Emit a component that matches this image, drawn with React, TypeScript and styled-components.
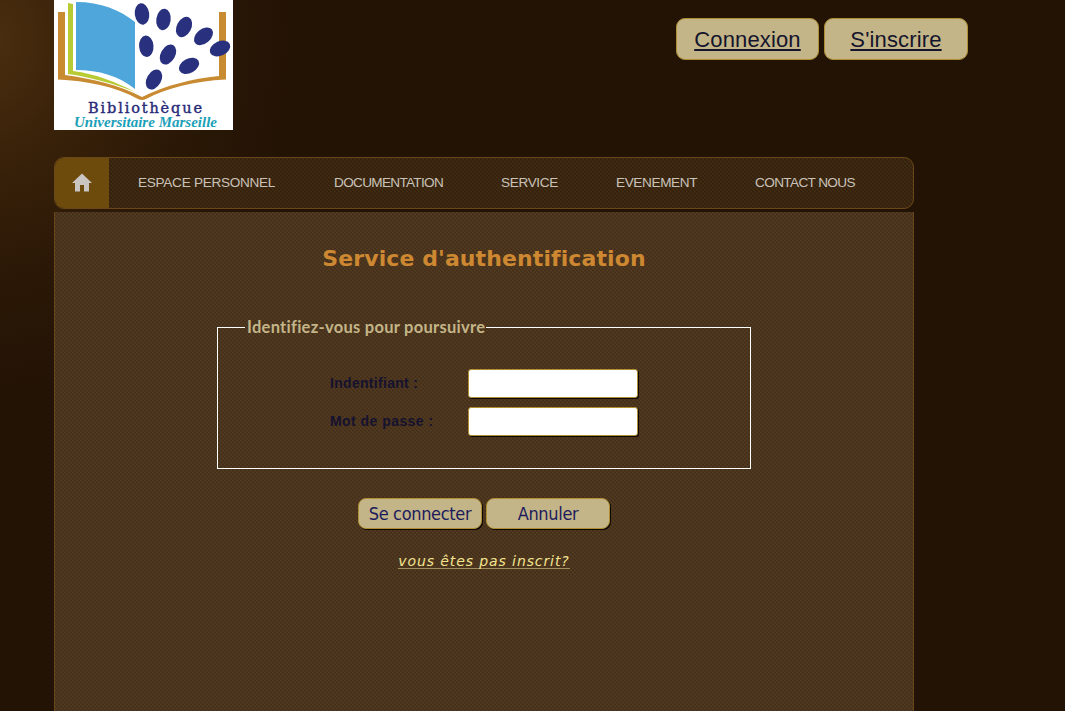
import React from 'react';
import styled, { createGlobalStyle, css } from 'styled-components';

const GlobalStyle = createGlobalStyle`
  * { box-sizing: border-box; }
  html { background: #231305; }
  body {
    margin: 0;
    height: 711px;
    overflow: hidden;
    font-family: "Liberation Sans", Arial, sans-serif;
    background: radial-gradient(ellipse 320px 360px at -20px 40px, #4c2f10 0%, #3b230a 30%, #2b1806 65%, #231305 100%) no-repeat #231305;
  }
`;

const weave = css`
  background-image:
    repeating-linear-gradient(45deg, rgba(255, 210, 140, 0.05) 0 1.414px, transparent 1.414px 2.828px),
    repeating-linear-gradient(-45deg, rgba(0, 0, 0, 0.1) 0 1.414px, transparent 1.414px 2.828px);
`;

const Page = styled.div`
  width: 914px;
  height: 711px;
  margin-left: 54px;
  display: flex;
  flex-direction: column;
`;

const Header = styled.header`
  height: 157px;
  flex: none;
  display: flex;
  justify-content: space-between;
  align-items: flex-start;
`;

const Logo = styled.svg`
  display: block;
  width: 179px;
  height: 130px;
`;

const Account = styled.div`
  display: flex;
  gap: 5px;
  padding-top: 18px;
`;

const AccountLink = styled.a<{ $width: number }>`
  width: ${(p) => p.$width}px;
  height: 42px;
  border: 1px solid #b08f33;
  border-radius: 9px;
  background: #c3b588;
  color: #14142c;
  font-size: 22px;
  letter-spacing: 0.15px;
  line-height: 41px;
  text-align: center;
  text-decoration: underline;
  text-decoration-thickness: 2px;
  text-underline-offset: 2px;
  text-decoration-skip-ink: none;
  white-space: nowrap;
`;

const Nav = styled.nav`
  width: 860px;
  height: 52px;
  flex: none;
  display: flex;
  border: 1px solid #6a4718;
  border-radius: 10px;
  overflow: hidden;
  background-color: #38230d;
  ${weave}
`;

const Home = styled.a`
  width: 54px;
  display: flex;
  align-items: center;
  justify-content: center;
  padding-bottom: 2px;
  background: #6c4b0d;
`;

const NavLink = styled.a<{ $width: number; $spacing: number }>`
  margin-left: 29px;
  margin-right: 29px;
  width: ${(p) => p.$width}px;
  color: #c9c2b9;
  font-size: 13.6px;
  letter-spacing: ${(p) => p.$spacing}px;
  line-height: 49px;
  white-space: nowrap;
`;

const Panel = styled.main`
  width: 860px;
  height: 499px;
  flex: none;
  margin-top: 3px;
  border: solid #6a4718;
  border-width: 0 1px;
  background-color: #4a331c;
  ${weave}
  background-clip: padding-box;
  display: flex;
  flex-direction: column;
  align-items: center;
`;

const Title = styled.h1`
  margin: 33px 0 0;
  height: 28px;
  font: bold 22px/28px "DejaVu Sans", Verdana, sans-serif;
  font-variant-ligatures: none;
  letter-spacing: 0.1px;
  color: #cd8831;
  white-space: nowrap;
`;

const Form = styled.form`
  display: flex;
  flex-direction: column;
  align-items: center;
`;

const Group = styled.fieldset`
  width: 534px;
  height: 153px;
  margin: 43px 0 0;
  padding: 30px 0 0 112px;
  border: 1px solid #fff;
`;

const Legend = styled.legend`
  margin-left: -85px;
  padding: 0 2px;
  height: 22px;
  width: 241px;
  font: bold 16.5px/22px Lato, "Trebuchet MS", sans-serif;
  letter-spacing: 0.27px;
  color: #c3b588;
  white-space: nowrap;
`;

const Field = styled.label`
  display: flex;
  align-items: center;
  height: 30px;
  margin-bottom: 8px;
`;

const FieldName = styled.span<{ $spacing: number }>`
  width: 138px;
  font-size: 14px;
  font-weight: bold;
  letter-spacing: ${(p) => p.$spacing}px;
  color: #15122f;
  white-space: nowrap;
`;

const Input = styled.input`
  width: 170px;
  height: 29px;
  border: 1px solid #b08f33;
  border-radius: 3px;
  background: #fff;
  box-shadow: 1px 1px 0 #0d0703;
  outline: none;
`;

const Actions = styled.div`
  display: flex;
  gap: 4px;
  margin-top: 29px;
`;

const Button = styled.button`
  width: 124px;
  height: 31px;
  padding: 0;
  border: 1px solid #b08f33;
  border-radius: 8px;
  background: #c3b588;
  box-shadow: 1px 1px 0 #0d0703;
  color: #1b1b5c;
  font: 18px/27px "DejaVu Sans Condensed", "DejaVu Sans", Tahoma, sans-serif;
  font-stretch: condensed;
  letter-spacing: -0.33px;
  white-space: nowrap;
`;

const Register = styled.a`
  margin-top: 23px;
  height: 17px;
  border-bottom: 1px solid #a2905c;
  font: italic 14px/19px "DejaVu Sans", Verdana, sans-serif;
  letter-spacing: 0.9px;
  color: #f3e38f;
  white-space: nowrap;
`;

const seeds: [number, number, number][] = [
  [88, 14, -8],
  [109.5, 19.5, 8],
  [130, 27, 28],
  [149.5, 36.3, 50],
  [166, 48.5, 65],
  [92.3, 46.3, -4],
  [114, 54.5, 30],
  [135, 65.8, 62],
  [100, 79.5, 30],
];

const links: [string, number, number][] = [
  ['ESPACE PERSONNEL', 138, -0.29],
  ['DOCUMENTATION', 109, -0.69],
  ['SERVICE', 57, -0.36],
  ['EVENEMENT', 81, -0.39],
  ['CONTACT NOUS', 101, -0.63],
];

const LibraryLogo = () => (
  <Logo viewBox="0 0 179 130" role="img" aria-label="Bibliothèque Universitaire Marseille">
    <rect width="179" height="130" fill="#fff" />
    <path d="M4 12H11V75C39 79 65 85 88 97C113 85 137 79 165 76V12H172V79.500C140 81 113 88 92 99Q88 101 84 99C61 86 32 81 4 79.500Z" fill="#c98b31" />
    <path d="M14 3L19 4V71C42 74 62 82 81 92C61 84 36 77 14 74Z" fill="#b8cb35" />
    <path d="M22 2C47 2 66 10 81 22V89C65 76 45 70 22 70Z" fill="#4ea6da" />
    {seeds.map(([x, y, turn]) => (
      <ellipse key={x} cx={x} cy={y} rx="7.2" ry="10.8" fill="#29317f" transform={`rotate(${turn} ${x} ${y})`} />
    ))}
    <text x="34" y="112.500" textLength="114" fontFamily="'DejaVu Serif', serif" fontSize="14.500" fill="#292b78" stroke="#292b78" strokeWidth="0.4">Bibliothèque</text>
    <text x="20" y="127" textLength="143" lengthAdjust="spacingAndGlyphs" fontFamily="'Brush Script MT', 'Liberation Serif', cursive" fontStyle="italic" fontWeight="bold" fontSize="14" fill="#1ba0b8">Universitaire Marseille</text>
  </Logo>
);

export default function App() {
  return (
    <>
      <GlobalStyle />
      <Page>
        <Header>
          <LibraryLogo />
          <Account>
            <AccountLink $width={143}>Connexion</AccountLink>
            <AccountLink $width={144}>S'inscrire</AccountLink>
          </Account>
        </Header>
        <Nav>
          <Home aria-label="Accueil">
            <svg width="20" height="19" viewBox="0 0 20 19">
              <path d="M10 .5L20 10H17V18.500H12V12H8V18.500H3V10H0Z" fill="#c9c5c3" />
            </svg>
          </Home>
          {links.map(([name, width, spacing]) => (
            <NavLink key={name} $width={width} $spacing={spacing}>{name}</NavLink>
          ))}
        </Nav>
        <Panel>
          <Title>Service d'authentification</Title>
          <Form>
            <Group>
              <Legend>Identifiez-vous pour poursuivre</Legend>
              <Field>
                <FieldName $spacing={0.3}>Indentifiant :</FieldName>
                <Input type="text" />
              </Field>
              <Field>
                <FieldName $spacing={0.45}>Mot de passe :</FieldName>
                <Input type="password" />
              </Field>
            </Group>
            <Actions>
              <Button type="button">Se connecter</Button>
              <Button type="button">Annuler</Button>
            </Actions>
          </Form>
          <Register>vous êtes pas inscrit?</Register>
        </Panel>
      </Page>
    </>
  );
}
